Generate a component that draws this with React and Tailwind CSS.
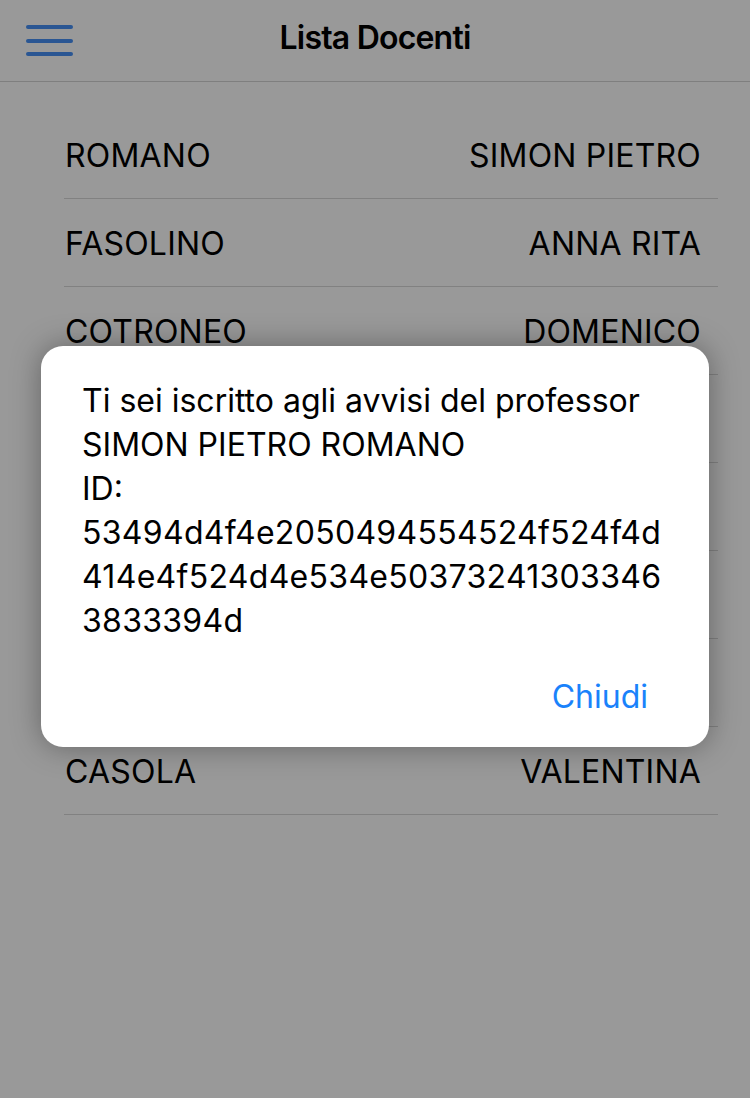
import React from 'react';

const rows = [
  ['ROMANO', 'SIMON PIETRO'],
  ['FASOLINO', 'ANNA RITA'],
  ['COTRONEO', 'DOMENICO'],
  ['', ''],
  ['', ''],
  ['', ''],
  ['', ''],
  ['CASOLA', 'VALENTINA'],
];

const App = () => {
  return (
    <div className="relative w-[750px] h-[1098px] bg-white overflow-hidden text-black" style={{ fontFamily: 'Inter, "Liberation Sans", Arial, sans-serif' }}>
      <div className="relative h-[82px] border-b border-[#d4d4d4] flex items-center justify-center">
        <button className="absolute left-[26px] top-[25px] w-[47px] flex flex-col gap-[9.5px]">
          <span className="block h-[4px] rounded-full bg-[#4690f5]"></span>
          <span className="block h-[4px] rounded-full bg-[#4690f5]"></span>
          <span className="block h-[4px] rounded-full bg-[#4690f5]"></span>
        </button>
        <h1 className="text-[32px] font-semibold -mt-[6px] tracking-[-0.8px]">Lista Docenti</h1>
      </div>

      <div className="pt-[29px] pl-[64px] pr-[32px]">
        {rows.map(([last, first], i) => (
          <div key={i} className="h-[88px] border-b border-[#d8d8d8] flex items-center justify-between pl-[1px] pr-[17px] pt-[2px] text-[32px] tracking-[0.2px]">
            <span>{last}</span>
            <span>{first}</span>
          </div>
        ))}
      </div>

      <div className="absolute inset-0 bg-black/40"></div>

      <div className="absolute left-[41px] top-[346px] w-[668px] h-[401px] bg-white rounded-[22px] shadow-[0_0_30px_rgba(0,0,0,0.35)] flex flex-col">
        <div className="pt-[33px] pl-[41px] pr-[10px] text-[32px] leading-[44px]">
          <p>Ti sei iscritto agli avvisi del professor</p>
          <p>SIMON PIETRO ROMANO</p>
          <p>ID:</p>
          <p className="tracking-[0.3px]">53494d4f4e2050494554524f524f4d</p>
          <p className="tracking-[0.3px]">414e4f524d4e534e50373241303346</p>
          <p className="tracking-[0.3px]">3833394d</p>
        </div>
        <div className="flex-1 flex items-center justify-end pr-[61px] pt-[4px]">
          <button className="text-[32px] text-[#1a82fb]">Chiudi</button>
        </div>
      </div>
    </div>
  );
};

export default App;
